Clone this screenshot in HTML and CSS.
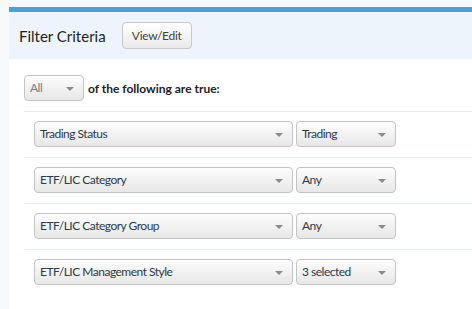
FILE: index.html
```html
<!DOCTYPE html>
<html lang="en">
<head>
  <meta charset="UTF-8">
  <title>Filter Criteria</title>
  <link rel="stylesheet" href="styles.css">
</head>
<body>
  <div class="panel">
    <div class="panel-header">
      <h3>Filter Criteria</h3>
      <button class="btn">View/Edit</button>
    </div>
    <div class="panel-body">
      <div class="match">
        <div class="dropdown dropdown-all"><span>All</span><i class="caret"></i></div>
        <b>of the following are true:</b>
      </div>
      <div class="rules">
        <div class="rule">
          <div class="dropdown dropdown-field"><span>Trading Status</span><i class="caret"></i></div>
          <div class="dropdown dropdown-value"><span>Trading</span><i class="caret"></i></div>
        </div>
        <div class="rule">
          <div class="dropdown dropdown-field"><span>ETF/LIC Category</span><i class="caret"></i></div>
          <div class="dropdown dropdown-value"><span>Any</span><i class="caret"></i></div>
        </div>
        <div class="rule">
          <div class="dropdown dropdown-field"><span>ETF/LIC Category Group</span><i class="caret"></i></div>
          <div class="dropdown dropdown-value"><span>Any</span><i class="caret"></i></div>
        </div>
        <div class="rule">
          <div class="dropdown dropdown-field"><span>ETF/LIC Management Style</span><i class="caret"></i></div>
          <div class="dropdown dropdown-value"><span>3 selected</span><i class="caret"></i></div>
        </div>
      </div>
    </div>
  </div>
</body>
</html>
```

FILE: styles.css
```css
/* Base */
html, body {
  margin: 0;
  padding: 0;
  background: #f7f9fc;
  font-family: 'Lato', sans-serif;
  color: #333;
}

.panel {
  margin: 7px 0 0 9px;
  border-top: 5px solid #4aa0dc;
  background: #fff;
  min-height: 297px;
}

.panel-header {
  display: flex;
  align-items: center;
  height: 47px;
  padding-left: 10px;
  background: #edf4fc;
}

.panel-header h3 {
  margin: 0;
  font-size: 15px;
  font-weight: normal;
  color: #222;
}

.btn {
  margin-left: 16px;
  height: 27px;
  width: 70px;
  padding: 0;
  font-family: inherit;
  font-size: 12px;
  letter-spacing: -0.3px;
  color: #444;
  background: linear-gradient(#ffffff, #e9e9e9);
  border: 1px solid #c8c8c8;
  border-radius: 4px;
}

.panel-body {
  padding: 16px 0 0 15px;
}

.match {
  display: flex;
  align-items: center;
  gap: 4px;
  font-size: 12px;
}

.match b {
  color: #222;
}

.rules {
  margin-top: 10px;
}

.rule {
  display: flex;
  gap: 3px;
  padding: 9px 0 10px 10px;
  border-top: 1px solid #e6eef7;
}

/* Fake select boxes */
.dropdown {
  position: relative;
  display: flex;
  align-items: center;
  box-sizing: border-box;
  height: 26px;
  padding: 0 0 2px 5px;
  font-size: 12px;
  letter-spacing: -0.5px;
  color: #2b3a4d;
  background: linear-gradient(#fdfdfd, #e7e7e7);
  border: 1px solid #c4c4c4;
  border-radius: 4px;
}

.dropdown-all {
  width: 60px;
  color: #7a7a7a;
}

.dropdown-field {
  width: 259px;
}

.dropdown-value {
  width: 100px;
}

.caret {
  position: absolute;
  right: 9px;
  top: 11px;
  width: 0;
  height: 0;
  border-left: 4px solid transparent;
  border-right: 4px solid transparent;
  border-top: 4px solid #8a8a8a;
}
```
